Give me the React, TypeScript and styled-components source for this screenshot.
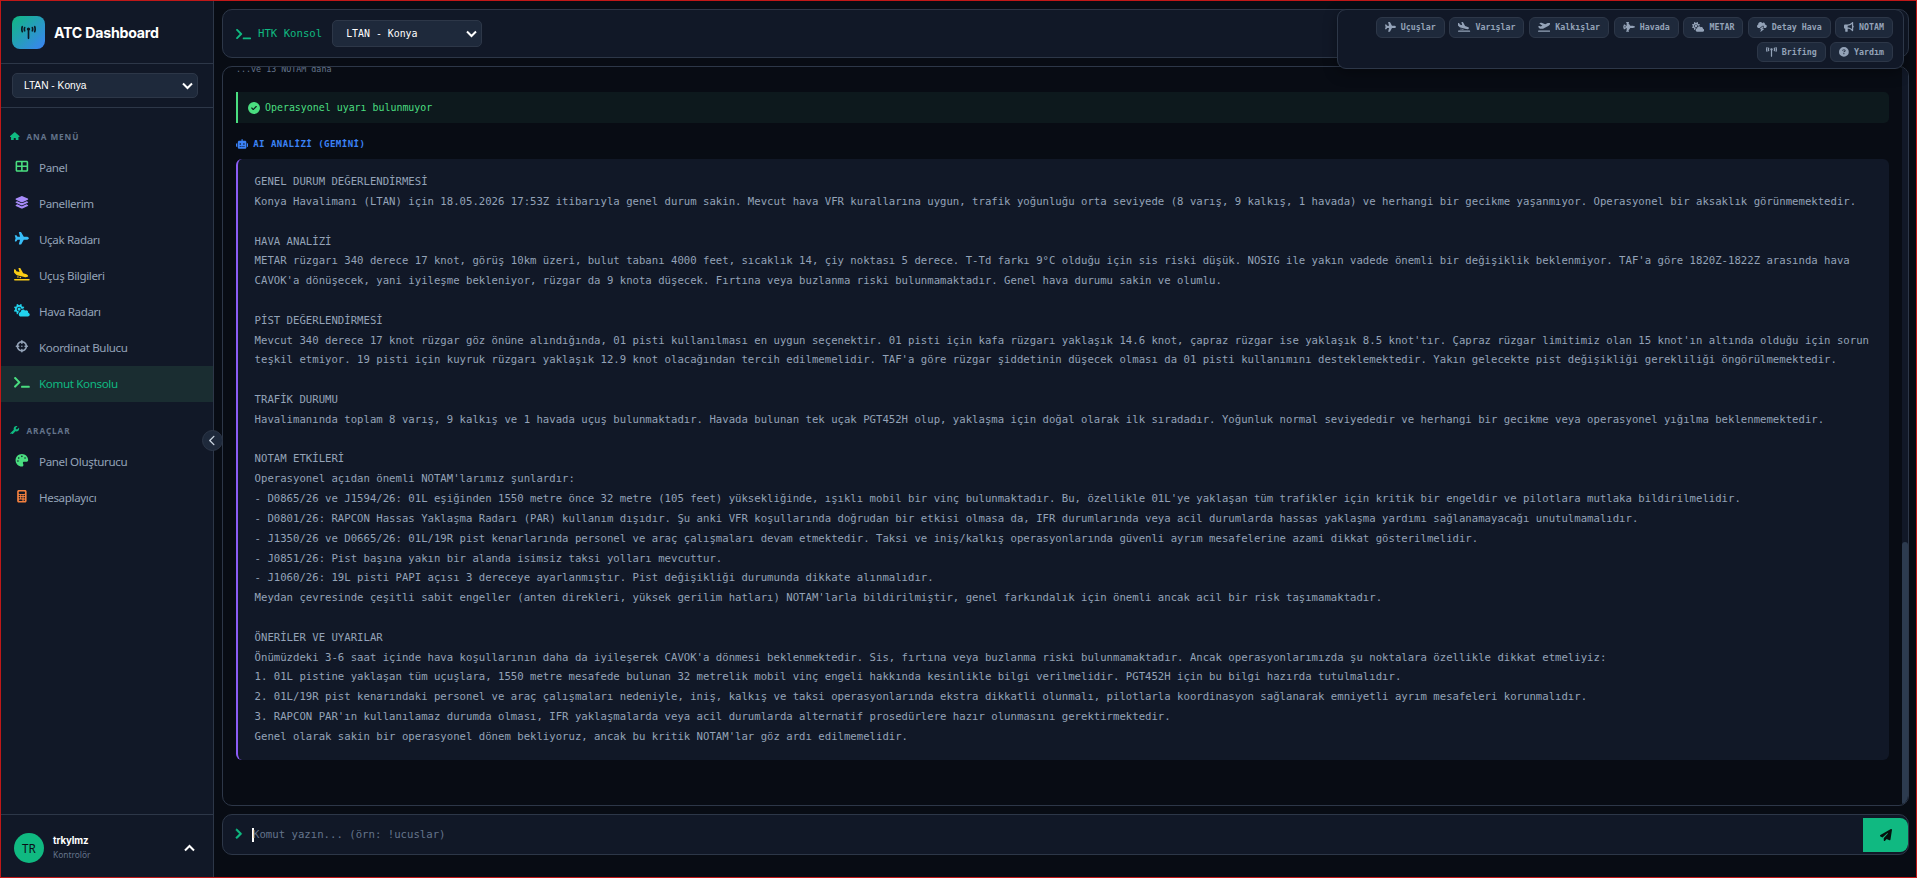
import React from 'react';
import styled, { createGlobalStyle } from 'styled-components';
import { FaChevronRight, FaTerminal } from 'react-icons/fa';
import {
  FaBullhorn,
  FaCalculator,
  FaChevronLeft,
  FaCircleCheck,
  FaCircleQuestion,
  FaCloudBolt,
  FaCloudSun,
  FaCrosshairs,
  FaHouse,
  FaJetFighter,
  FaLayerGroup,
  FaPalette,
  FaPaperPlane,
  FaPlane,
  FaPlaneArrival,
  FaPlaneDeparture,
  FaRobot,
  FaTableCellsLarge,
  FaTowerBroadcast,
  FaWrench,
} from 'react-icons/fa6';

const mono = `'DejaVu Sans Mono', monospace`;
const sans = `'Noto Sans', 'Open Sans', sans-serif`;

const menu = [
  { label: 'Panel', icon: <FaTableCellsLarge />, color: '#4ade80' },
  { label: 'Panellerim', icon: <FaLayerGroup />, color: '#a78bfa' },
  { label: 'Uçak Radarı', icon: <FaPlane />, color: '#38bdf8' },
  { label: 'Uçuş Bilgileri', icon: <FaPlaneArrival />, color: '#facc15' },
  { label: 'Hava Radarı', icon: <FaCloudSun />, color: '#22d3ee' },
  { label: 'Koordinat Bulucu', icon: <FaCrosshairs />, color: '#94a3b8' },
  { label: 'Komut Konsolu', icon: <FaTerminal />, color: '#4ade80', active: true },
];

const tools = [
  { label: 'Panel Oluşturucu', icon: <FaPalette />, color: '#4ade80' },
  { label: 'Hesaplayıcı', icon: <FaCalculator />, color: '#f4803f' },
];

const commands = [
  { label: 'Uçuşlar', icon: <FaPlane />, iconWidth: 11 },
  { label: 'Varışlar', icon: <FaPlaneArrival />, iconWidth: 12.2 },
  { label: 'Kalkışlar', icon: <FaPlaneDeparture />, iconWidth: 12.2 },
  { label: 'Havada', icon: <FaJetFighter />, iconWidth: 12.2 },
  { label: 'METAR', icon: <FaCloudSun />, iconWidth: 12.2 },
  { label: 'Detay Hava', icon: <FaCloudBolt />, iconWidth: 9.8 },
  { label: 'NOTAM', icon: <FaBullhorn />, iconWidth: 9.8 },
  { label: 'Brifing', icon: <FaTowerBroadcast />, iconWidth: 11 },
  { label: 'Yardım', icon: <FaCircleQuestion />, iconWidth: 9.8 },
];

const analysis = `GENEL DURUM DEĞERLENDİRMESİ
Konya Havalimanı (LTAN) için 18.05.2026 17:53Z itibarıyla genel durum sakin. Mevcut hava VFR kurallarına uygun, trafik yoğunluğu orta seviyede (8 varış, 9 kalkış, 1 havada) ve herhangi bir gecikme yaşanmıyor. Operasyonel bir aksaklık görünmemektedir.

HAVA ANALİZİ
METAR rüzgarı 340 derece 17 knot, görüş 10km üzeri, bulut tabanı 4000 feet, sıcaklık 14, çiy noktası 5 derece. T-Td farkı 9°C olduğu için sis riski düşük. NOSIG ile yakın vadede önemli bir değişiklik beklenmiyor. TAF'a göre 1820Z-1822Z arasında hava
CAVOK'a dönüşecek, yani iyileşme bekleniyor, rüzgar da 9 knota düşecek. Fırtına veya buzlanma riski bulunmamaktadır. Genel hava durumu sakin ve olumlu.

PİST DEĞERLENDİRMESİ
Mevcut 340 derece 17 knot rüzgar göz önüne alındığında, 01 pisti kullanılması en uygun seçenektir. 01 pisti için kafa rüzgarı yaklaşık 14.6 knot, çapraz rüzgar ise yaklaşık 8.5 knot'tır. Çapraz rüzgar limitimiz olan 15 knot'ın altında olduğu için sorun
teşkil etmiyor. 19 pisti için kuyruk rüzgarı yaklaşık 12.9 knot olacağından tercih edilmemelidir. TAF'a göre rüzgar şiddetinin düşecek olması da 01 pisti kullanımını desteklemektedir. Yakın gelecekte pist değişikliği gerekliliği öngörülmemektedir.

TRAFİK DURUMU
Havalimanında toplam 8 varış, 9 kalkış ve 1 havada uçuş bulunmaktadır. Havada bulunan tek uçak PGT452H olup, yaklaşma için doğal olarak ilk sıradadır. Yoğunluk normal seviyededir ve herhangi bir gecikme veya operasyonel yığılma beklenmemektedir.

NOTAM ETKİLERİ
Operasyonel açıdan önemli NOTAM'larımız şunlardır:
- D0865/26 ve J1594/26: 01L eşiğinden 1550 metre önce 32 metre (105 feet) yüksekliğinde, ışıklı mobil bir vinç bulunmaktadır. Bu, özellikle 01L'ye yaklaşan tüm trafikler için kritik bir engeldir ve pilotlara mutlaka bildirilmelidir.
- D0801/26: RAPCON Hassas Yaklaşma Radarı (PAR) kullanım dışıdır. Şu anki VFR koşullarında doğrudan bir etkisi olmasa da, IFR durumlarında veya acil durumlarda hassas yaklaşma yardımı sağlanamayacağı unutulmamalıdır.
- J1350/26 ve D0665/26: 01L/19R pist kenarlarında personel ve araç çalışmaları devam etmektedir. Taksi ve iniş/kalkış operasyonlarında güvenli ayrım mesafelerine azami dikkat gösterilmelidir.
- J0851/26: Pist başına yakın bir alanda isimsiz taksi yolları mevcuttur.
- J1060/26: 19L pisti PAPI açısı 3 dereceye ayarlanmıştır. Pist değişikliği durumunda dikkate alınmalıdır.
Meydan çevresinde çeşitli sabit engeller (anten direkleri, yüksek gerilim hatları) NOTAM'larla bildirilmiştir, genel farkındalık için önemli ancak acil bir risk taşımamaktadır.

ÖNERİLER VE UYARILAR
Önümüzdeki 3-6 saat içinde hava koşullarının daha da iyileşerek CAVOK'a dönmesi beklenmektedir. Sis, fırtına veya buzlanma riski bulunmamaktadır. Ancak operasyonlarımızda şu noktalara özellikle dikkat etmeliyiz:
1. 01L pistine yaklaşan tüm uçuşlara, 1550 metre mesafede bulunan 32 metrelik mobil vinç engeli hakkında kesinlikle bilgi verilmelidir. PGT452H için bu bilgi hazırda tutulmalıdır.
2. 01L/19R pist kenarındaki personel ve araç çalışmaları nedeniyle, iniş, kalkış ve taksi operasyonlarında ekstra dikkatli olunmalı, pilotlarla koordinasyon sağlanarak emniyetli ayrım mesafeleri korunmalıdır.
3. RAPCON PAR'ın kullanılamaz durumda olması, IFR yaklaşmalarda veya acil durumlarda alternatif prosedürlere hazır olunmasını gerektirmektedir.
Genel olarak sakin bir operasyonel dönem bekliyoruz, ancak bu kritik NOTAM'lar göz ardı edilmemelidir.`;

const Chevron = ({ up }: { up?: boolean }) => (
  <ChevronSvg viewBox="0 0 11 8">
    <path d={up ? 'M1 6.5 5.5 2 10 6.5' : 'M1 1.5 5.5 6 10 1.5'} />
  </ChevronSvg>
);

const App = () => {
  return (
    <Page>
      <GlobalStyle />
      <Sidebar>
        <Brand>
          <Logo>
            <FaTowerBroadcast />
          </Logo>
          <BrandName>ATC Dashboard</BrandName>
        </Brand>
        <AirportBox>
          <SidebarSelect>
            LTAN - Konya
            <Chevron />
          </SidebarSelect>
        </AirportBox>
        <Nav>
          <SectionTitle>
            <FaHouse />
            ANA MENÜ
          </SectionTitle>
          {menu.map((item) => (
            <NavItem key={item.label} $active={item.active}>
              <NavIcon $color={item.color}>{item.icon}</NavIcon>
              {item.label}
            </NavItem>
          ))}
          <SectionTitle>
            <FaWrench />
            ARAÇLAR
          </SectionTitle>
          {tools.map((item) => (
            <NavItem key={item.label}>
              <NavIcon $color={item.color}>{item.icon}</NavIcon>
              {item.label}
            </NavItem>
          ))}
        </Nav>
        <UserBar>
          <Avatar>TR</Avatar>
          <UserInfo>
            <UserName>trkylmz</UserName>
            <UserRole>Kontrolör</UserRole>
          </UserInfo>
          <Chevron up />
        </UserBar>
        <Collapse>
          <FaChevronLeft />
        </Collapse>
      </Sidebar>

      <Main>
        <TopBar>
          <TitleIcon>
            <FaTerminal />
          </TitleIcon>
          <ConsoleTitle>HTK Konsol</ConsoleTitle>
          <ConsoleSelect>
            LTAN - Konya
            <Chevron />
          </ConsoleSelect>
          <Commands>
            {commands.map((command) => (
              <Command key={command.label} $iconWidth={command.iconWidth}>
                {command.icon}
                {command.label}
              </Command>
            ))}
          </Commands>
        </TopBar>

        <Output>
          <OutputBody>
            <More>...ve 13 NOTAM daha</More>
            <Notice>
              <FaCircleCheck />
              Operasyonel uyarı bulunmuyor
            </Notice>
            <AiTitle>
              <FaRobot />
              AI ANALİZİ (GEMİNİ)
            </AiTitle>
            <Analysis>{analysis}</Analysis>
          </OutputBody>
          <ScrollTrack>
            <ScrollThumb />
          </ScrollTrack>
        </Output>

        <Prompt>
          <PromptIcon>
            <FaChevronRight />
          </PromptIcon>
          <Caret />
          <Placeholder>Komut yazın... (örn: !ucuslar)</Placeholder>
          <Send>
            <FaPaperPlane />
          </Send>
        </Prompt>
      </Main>
    </Page>
  );
};

const GlobalStyle = createGlobalStyle`
  * {
    box-sizing: border-box;
  }

  body {
    margin: 0;
    background: #080c14;
  }

  svg {
    flex-shrink: 0;
  }
`;

const Page = styled.div`
  display: flex;
  width: 100%;
  height: 100vh;
  overflow: hidden;
  outline: 1px solid #c01818;
  outline-offset: -1px;
  background: #080c14;
  color: #94a3b8;
  font-family: ${sans};
`;

const Sidebar = styled.aside`
  display: flex;
  flex-direction: column;
  width: 214px;
  flex-shrink: 0;
  background: #111827;
  border-right: 1px solid #2d3748;
`;

const Brand = styled.div`
  display: flex;
  align-items: center;
  gap: 9px;
  height: 64px;
  padding: 1px 12px 0;
  border-bottom: 1px solid #2d3748;
`;

const Logo = styled.div`
  display: flex;
  align-items: center;
  justify-content: center;
  width: 33px;
  height: 33px;
  border-radius: 8px;
  background: linear-gradient(135deg, #10b981, #3b82f6);
  color: #0b1a24;
  font-size: 15px;
`;

const BrandName = styled.div`
  color: #fff;
  font-family: Inter, sans-serif;
  font-size: 14.2px;
  font-weight: 700;
  letter-spacing: -0.25px;
`;

const AirportBox = styled.div`
  height: 44px;
  padding: 9px 15px 0 12px;
  border-bottom: 1px solid #2d3748;
`;

const Select = styled.div`
  display: flex;
  align-items: center;
  justify-content: space-between;
  background: #1e293b;
  border: 1px solid #2d3748;
  border-radius: 5px;
  color: #fff;
`;

const ChevronSvg = styled.svg`
  width: 11px;
  height: 8px;
  fill: none;
  stroke: #fff;
  stroke-width: 2px;
`;

const SidebarSelect = styled(Select)`
  height: 25px;
  padding: 0 4px 0 11px;
  font-family: 'Liberation Sans', sans-serif;
  font-size: 10.2px;
`;

const Nav = styled.nav`
  flex: 1;
`;

const SectionTitle = styled.div`
  display: flex;
  align-items: center;
  gap: 7px;
  height: 42px;
  padding: 14px 0 0 10px;
  color: #64748b;
  font-size: 8.2px;
  font-weight: 700;
  letter-spacing: 0.95px;

  svg {
    width: 9.5px;
    height: 8.8px;
    color: #10b981;
  }
`;

const NavItem = styled.div<{ $active?: boolean }>`
  display: flex;
  align-items: center;
  gap: 8px;
  height: 36px;
  padding: 0 0 1px 13px;
  background: ${({ $active }) => ($active ? '#1a2d31' : 'transparent')};
  color: ${({ $active }) => ($active ? '#10b981' : '#94a3b8')};
  font-size: 11.6px;
  letter-spacing: -0.36px;
`;

const NavIcon = styled.span<{ $color: string }>`
  display: flex;
  justify-content: center;
  width: 18px;
  padding-bottom: 2px;
  color: ${({ $color }) => $color};
  font-size: 12.6px;

  svg {
    width: 1.25em;
  }
`;

const UserBar = styled.div`
  display: flex;
  align-items: center;
  height: 64px;
  padding: 2px 18px 0 14px;
  border-top: 1px solid #2d3748;
`;

const Avatar = styled.div`
  display: flex;
  align-items: center;
  justify-content: center;
  width: 30px;
  height: 30px;
  border-radius: 50%;
  background: #10b981;
  color: #0a0e17;
  font-size: 11.7px;
`;

const UserInfo = styled.div`
  flex: 1;
  padding-left: 9px;
`;

const UserName = styled.div`
  color: #fff;
  font-family: Inter, sans-serif;
  font-size: 9.7px;
  font-weight: 700;
  letter-spacing: -0.1px;
  line-height: 15px;
`;

const UserRole = styled.div`
  color: #64748b;
  font-size: 8.4px;
  line-height: 14px;
`;

/* handle sits on the sidebar's edge */
const Collapse = styled.button`
  position: absolute;
  top: 430px;
  left: 202px;
  z-index: 2;
  display: flex;
  align-items: center;
  justify-content: center;
  width: 21px;
  height: 21px;
  padding: 0;
  border: 1px solid #2d3748;
  border-radius: 50%;
  background: #1e293b;
  color: #cbd5e1;
  font-size: 11px;
`;

const Main = styled.main`
  flex: 1;
  display: flex;
  flex-direction: column;
  gap: 8px;
  padding: 9px 8px 23px;
  font-family: ${mono};
`;

const TopBar = styled.header`
  position: relative;
  display: flex;
  align-items: center;
  height: 49px;
  padding-left: 13px;
  background: #111827;
  border: 1px solid #2d3748;
  border-radius: 10px;
  color: #10b981;
`;

const TitleIcon = styled.span`
  display: flex;
  font-size: 12px;

  svg {
    width: 1.25em;
  }
`;

const ConsoleTitle = styled.div`
  margin: 0 10px 0 7px;
  font-size: 10.66px;
`;

const ConsoleSelect = styled(Select)`
  width: 150px;
  height: 27px;
  padding: 0 4px 0 13px;
  font-size: 9.9px;
`;

/* quick commands float over the bar and the output below it */
const Commands = styled.div`
  position: absolute;
  top: -1px;
  right: 4px;
  z-index: 1;
  display: flex;
  flex-wrap: wrap;
  align-content: flex-start;
  justify-content: flex-end;
  gap: 4px 4.5px;
  width: 567px;
  height: 60px;
  padding: 7px 10px;
  background: #111827;
  border: 1px solid #2d3748;
  border-radius: 9px;
  box-shadow: 0 4px 14px rgba(0, 0, 0, 0.35);
`;

const Command = styled.button<{ $iconWidth: number }>`
  display: flex;
  align-items: center;
  gap: 5px;
  height: 20.5px;
  padding: 0 8px;
  border: 1px solid #2d3748;
  border-radius: 6px;
  background: #1e293b;
  color: #94a3b8;
  font-family: ${mono};
  font-size: 8.3px;
  font-weight: 700;

  svg {
    width: ${({ $iconWidth }) => $iconWidth}px;
    height: 9.8px;
  }
`;

const Output = styled.section`
  flex: 1;
  display: flex;
  min-height: 0;
  overflow: hidden;
  border: 1px solid #2d3748;
  border-radius: 10px;
`;

const OutputBody = styled.div`
  flex: 1;
  padding: 0 13px;
  overflow: hidden;
`;

/* scrolled half out of the panel */
const More = styled.div`
  margin-top: -4px;
  height: 29px;
  color: #64748b;
  font-size: 8.35px;
  line-height: 13px;
`;

const Notice = styled.div`
  display: flex;
  align-items: center;
  gap: 5px;
  height: 31px;
  padding-left: 10px;
  border-left: 2px solid #4ade80;
  border-radius: 0 5px 5px 0;
  background: #0d191d;
  color: #4ade80;
  font-size: 9.93px;

  svg {
    width: 12px;
    height: 12px;
  }
`;

const AiTitle = styled.div`
  display: flex;
  align-items: center;
  gap: 5px;
  height: 36px;
  padding-top: 6px;
  color: #3b82f6;
  font-size: 9.1px;
  font-weight: 700;
  letter-spacing: 0.43px;

  svg {
    width: 12.2px;
    height: 9.8px;
  }
`;

const Analysis = styled.div`
  height: 601px;
  padding: 13.1px 16.6px 12px;
  overflow: hidden;
  border-left: 2px solid #8b5cf6;
  border-radius: 6px;
  background: #111827;
  color: #94a3b8;
  font-size: 10.655px;
  line-height: 19.82px;
  white-space: pre;
`;

const ScrollTrack = styled.div`
  display: flex;
  align-items: flex-end;
  width: 6px;
  background: #111827;
`;

const ScrollThumb = styled.div`
  width: 6px;
  height: 263px;
  border-radius: 3px;
  background: #2d3b4f;
`;

const Prompt = styled.div`
  display: flex;
  align-items: center;
  height: 41px;
  padding-left: 12px;
  overflow: hidden;
  background: #111827;
  border: 1px solid #2d3748;
  border-radius: 10px;
  font-size: 10.66px;
`;

const PromptIcon = styled.span`
  display: flex;
  justify-content: center;
  width: 8px;
  padding-bottom: 2px;
  color: #10b981;

  svg {
    width: 11.5px;
    height: 11.5px;
    stroke: currentColor;
    stroke-width: 20px;
  }
`;

const Caret = styled.span`
  width: 2px;
  height: 14px;
  margin-left: 9px;
  background: #fff;
`;

const Placeholder = styled.span`
  flex: 1;
  margin-left: -1px;
  color: #64748b;
`;

const Send = styled.button`
  display: flex;
  align-items: center;
  justify-content: center;
  width: 45px;
  height: 34px;
  padding: 0;
  border: none;
  border-radius: 0 8px 8px 0;
  background: #10b981;
  color: #06110d;
  font-size: 12px;
`;

export default App;
